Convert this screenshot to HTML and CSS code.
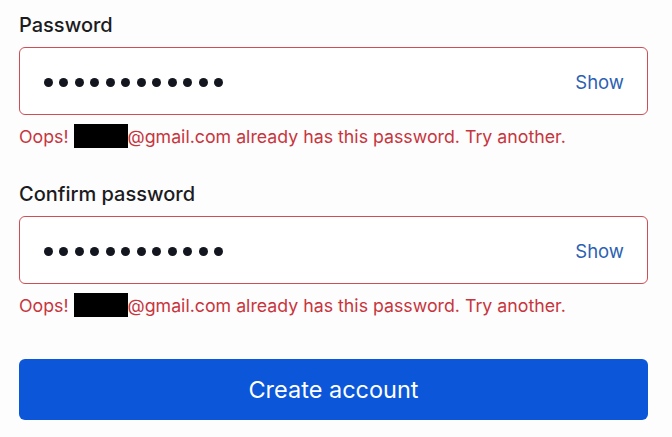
FILE: index.html
```html
<!DOCTYPE html>
<html lang="en">
<head>
<meta charset="utf-8">
<title>Create account</title>
<link rel="stylesheet" href="styles.css">
</head>
<body>
<form class="form">
  <label class="label label-first">Password</label>
  <div class="field">
    <div class="dots">
      <span></span><span></span><span></span><span></span><span></span><span></span>
      <span></span><span></span><span></span><span></span><span></span><span></span>
    </div>
    <span class="show">Show</span>
  </div>
  <p class="error">Oops! <span class="redact"></span>@gmail.com already has this password. Try another.</p>

  <label class="label label-next">Confirm password</label>
  <div class="field">
    <div class="dots">
      <span></span><span></span><span></span><span></span><span></span><span></span>
      <span></span><span></span><span></span><span></span><span></span><span></span>
    </div>
    <span class="show">Show</span>
  </div>
  <p class="error">Oops! <span class="redact"></span>@gmail.com already has this password. Try another.</p>

  <button type="button" class="submit">Create account</button>
</form>
</body>
</html>
```
FILE: styles.css
```css
html, body {
  margin: 0;
  padding: 0;
  background: #fdfdfd;
}
body {
  font-family: Inter, "Liberation Sans", sans-serif;
  color: #1b1b1d;
}
.form {
  display: flex;
  flex-direction: column;
  width: 629px;
  margin-left: 19px;
}
.label {
  display: block;
  font-size: 20px;
  line-height: 24px;
  font-weight: 500;
  color: #1c1c1e;
}
.label-first { margin-top: 13px; }
.label-next { margin-top: 34px; }
.field {
  margin-top: 10px;
  height: 68px;
  box-sizing: border-box;
  border: 1.5px solid #cf4d55;
  border-radius: 6px;
  background: #fff;
  display: flex;
  align-items: center;
  justify-content: space-between;
  padding: 0 23px 0 23.5px;
}
.dots {
  display: flex;
  gap: 6.5px;
  margin-top: 2px;
}
.dots span {
  width: 9px;
  height: 9px;
  border-radius: 50%;
  background: #14161f;
}
.show {
  font-size: 18.5px;
  color: #2c5fb3;
  margin-top: 2px;
}
.error {
  margin: 9px 0 0;
  font-size: 17.75px;
  line-height: 20px;
  color: #c8353d;
  white-space: nowrap;
}
.redact {
  display: inline-block;
  width: 54px;
  height: 24px;
  background: #000;
  vertical-align: -5px;
}
.submit {
  margin-top: 42px;
  height: 61px;
  border: none;
  border-radius: 6px;
  background: #0b56d9;
  color: #fff;
  font-family: Inter, "Liberation Sans", sans-serif;
  font-size: 23.5px;
  font-weight: 400;
  padding: 0;
}
```
